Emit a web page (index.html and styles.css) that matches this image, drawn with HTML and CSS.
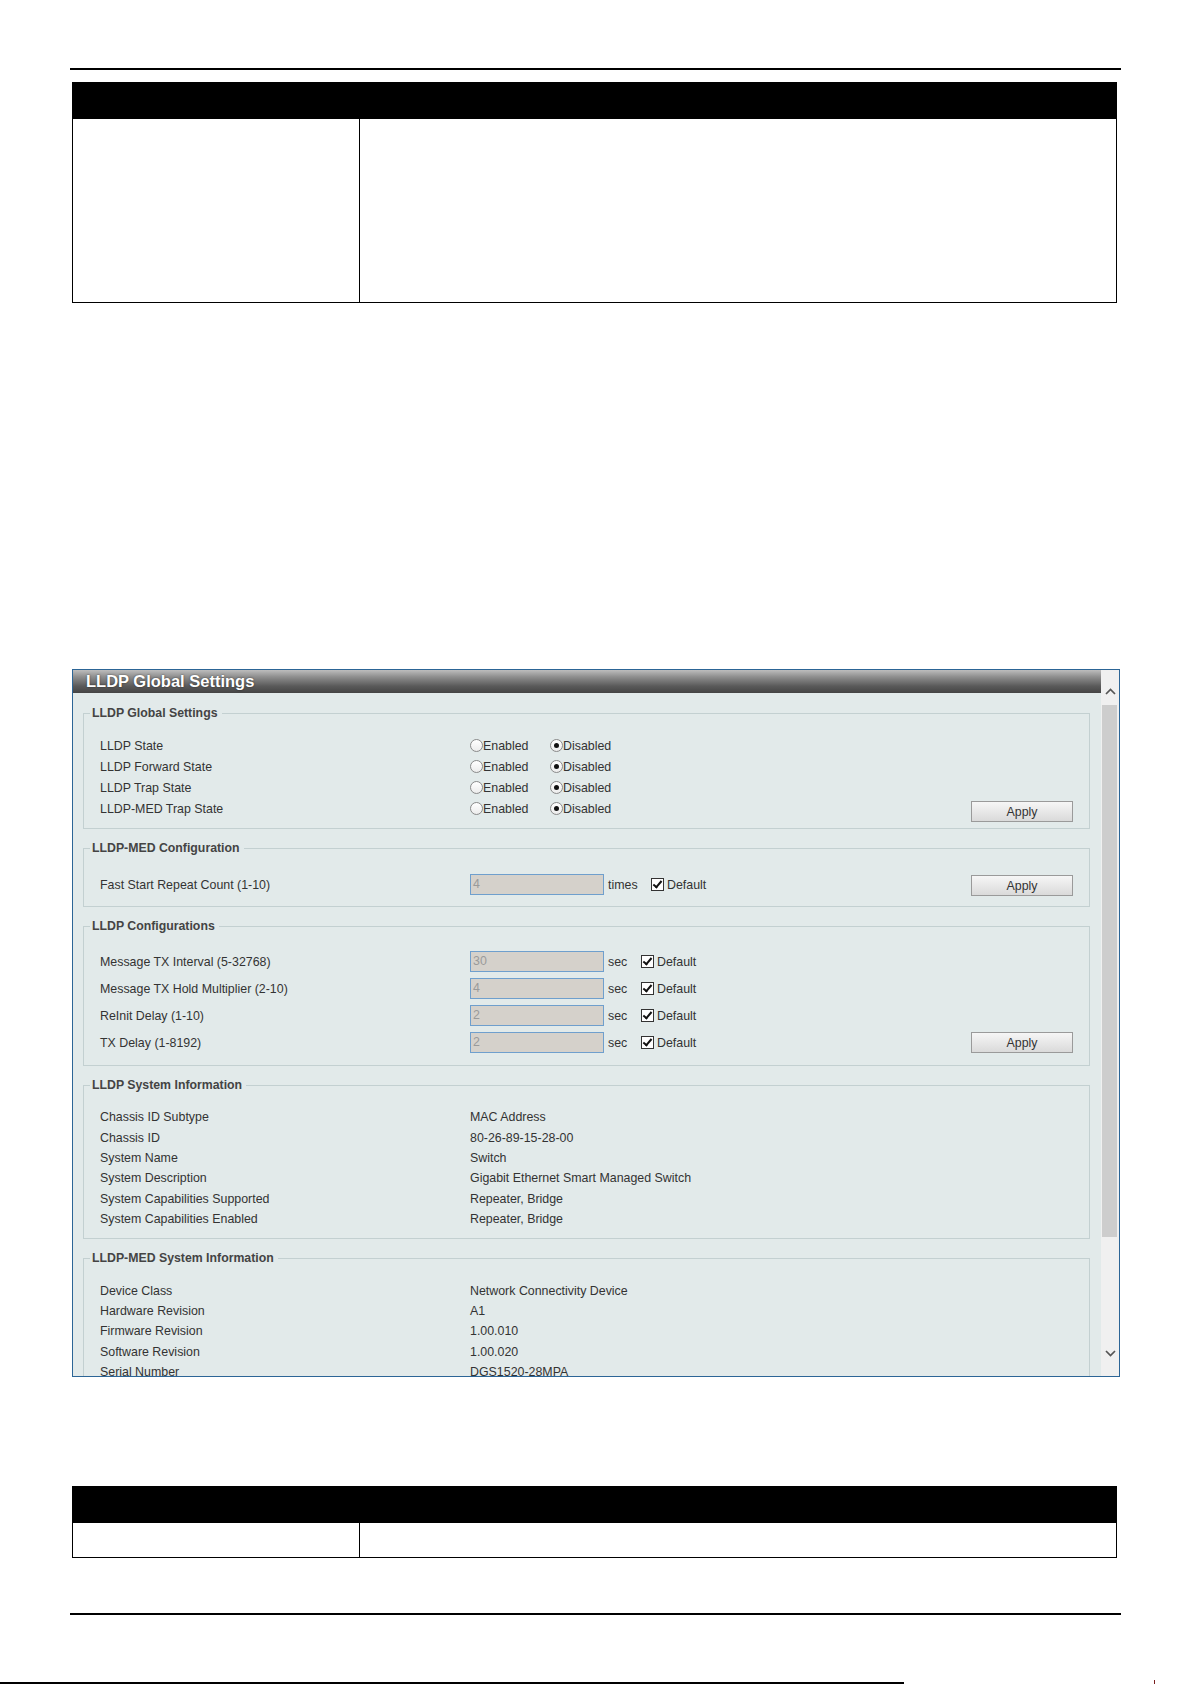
FILE: index.html
```html
<!DOCTYPE html>
<html lang="en">
<head>
    <meta charset="UTF-8">
    <title>LLDP Global Settings</title>
    <link rel="stylesheet" href="styles.css">
</head>
<body>
<div class="page">
    <div class="rule"></div>

    <div class="tbl tbl-big">
        <div class="tbl-head"></div>
        <div class="tbl-row">
            <div class="tbl-cell first"></div>
            <div class="tbl-cell"></div>
        </div>
    </div>

    <div class="panel">
        <div class="panel-main">
            <div class="panel-title">LLDP Global Settings</div>
            <div class="panel-content">

                <fieldset class="group">
                    <legend>LLDP Global Settings</legend>
                    <div class="row r-radio">
                        <span class="lbl">LLDP State</span>
                        <span class="opt"><span class="radio"></span>Enabled</span>
                        <span class="opt"><span class="radio on"></span>Disabled</span>
                    </div>
                    <div class="row r-radio">
                        <span class="lbl">LLDP Forward State</span>
                        <span class="opt"><span class="radio"></span>Enabled</span>
                        <span class="opt"><span class="radio on"></span>Disabled</span>
                    </div>
                    <div class="row r-radio">
                        <span class="lbl">LLDP Trap State</span>
                        <span class="opt"><span class="radio"></span>Enabled</span>
                        <span class="opt"><span class="radio on"></span>Disabled</span>
                    </div>
                    <div class="row r-radio">
                        <span class="lbl">LLDP-MED Trap State</span>
                        <span class="opt"><span class="radio"></span>Enabled</span>
                        <span class="opt"><span class="radio on"></span>Disabled</span>
                        <button class="apply">Apply</button>
                    </div>
                </fieldset>

                <fieldset class="group">
                    <legend>LLDP-MED Configuration</legend>
                    <div class="row r-input r-single">
                        <span class="lbl">Fast Start Repeat Count (1-10)</span>
                        <span class="field">4</span>
                        <span class="unit unit-times">times</span>
                        <span class="check"></span><span class="chk-text">Default</span>
                        <button class="apply">Apply</button>
                    </div>
                </fieldset>

                <fieldset class="group">
                    <legend>LLDP Configurations</legend>
                    <div class="row r-input">
                        <span class="lbl">Message TX Interval (5-32768)</span>
                        <span class="field">30</span>
                        <span class="unit">sec</span>
                        <span class="check"></span><span class="chk-text">Default</span>
                    </div>
                    <div class="row r-input">
                        <span class="lbl">Message TX Hold Multiplier (2-10)</span>
                        <span class="field">4</span>
                        <span class="unit">sec</span>
                        <span class="check"></span><span class="chk-text">Default</span>
                    </div>
                    <div class="row r-input">
                        <span class="lbl">ReInit Delay (1-10)</span>
                        <span class="field">2</span>
                        <span class="unit">sec</span>
                        <span class="check"></span><span class="chk-text">Default</span>
                    </div>
                    <div class="row r-input">
                        <span class="lbl">TX Delay (1-8192)</span>
                        <span class="field">2</span>
                        <span class="unit">sec</span>
                        <span class="check"></span><span class="chk-text">Default</span>
                        <button class="apply">Apply</button>
                    </div>
                </fieldset>

                <fieldset class="group">
                    <legend>LLDP System Information</legend>
                    <div class="row r-text"><span class="lbl">Chassis ID Subtype</span><span>MAC Address</span></div>
                    <div class="row r-text"><span class="lbl">Chassis ID</span><span>80-26-89-15-28-00</span></div>
                    <div class="row r-text"><span class="lbl">System Name</span><span>Switch</span></div>
                    <div class="row r-text"><span class="lbl">System Description</span><span>Gigabit Ethernet Smart Managed Switch</span></div>
                    <div class="row r-text"><span class="lbl">System Capabilities Supported</span><span>Repeater, Bridge</span></div>
                    <div class="row r-text"><span class="lbl">System Capabilities Enabled</span><span>Repeater, Bridge</span></div>
                </fieldset>

                <fieldset class="group">
                    <legend>LLDP-MED System Information</legend>
                    <div class="row r-text"><span class="lbl">Device Class</span><span>Network Connectivity Device</span></div>
                    <div class="row r-text"><span class="lbl">Hardware Revision</span><span>A1</span></div>
                    <div class="row r-text"><span class="lbl">Firmware Revision</span><span>1.00.010</span></div>
                    <div class="row r-text"><span class="lbl">Software Revision</span><span>1.00.020</span></div>
                    <div class="row r-text"><span class="lbl">Serial Number</span><span>DGS1520-28MPA</span></div>
                </fieldset>

            </div>
        </div>
        <div class="scroll">
            <div class="scroll-btn up">
                <svg width="11" height="7" viewBox="0 0 11 7"><polyline points="1,6 5.5,1.5 10,6" fill="none" stroke="#555" stroke-width="1.7"/></svg>
            </div>
            <div class="scroll-thumb"></div>
            <div class="scroll-track"></div>
            <div class="scroll-btn down">
                <svg width="11" height="7" viewBox="0 0 11 7"><polyline points="1,1 5.5,5.5 10,1" fill="none" stroke="#555" stroke-width="1.7"/></svg>
            </div>
        </div>
    </div>

    <div class="tbl tbl-small">
        <div class="tbl-head"></div>
        <div class="tbl-row">
            <div class="tbl-cell first"></div>
            <div class="tbl-cell"></div>
        </div>
    </div>

    <div class="rule rule-bottom"></div>
</div>

<div class="page-end">
    <div class="end-line"></div>
    <div class="end-tick"></div>
</div>
</body>
</html>
```

FILE: styles.css
```css
body {
    margin: 0;
    background: #FFFFFF;
    font-family: "Liberation Sans", Arial, sans-serif;
    font-size: 12.4px;
    color: #333;
}

.page {
    width: 1051px;
    margin-left: 70px;
    padding-top: 68px;
}

.rule {
    height: 2px;
    background: #000;
}

.rule-bottom {
    margin-top: 55px;
}

/* black-headed two column tables */
.tbl {
    width: 1045px;
    margin-left: 2px;
    border: 1px solid #000;
    box-sizing: border-box;
}

.tbl-big {
    margin-top: 12px;
}

.tbl-small {
    margin-top: 109px;
}

.tbl-head {
    height: 36px;
    background: #000;
}

.tbl-row {
    display: grid;
    grid-template-columns: 287px 1fr;
}

.tbl-big .tbl-row {
    height: 183px;
}

.tbl-small .tbl-row {
    height: 34px;
}

.tbl-cell.first {
    border-right: 1px solid #000;
}

/* web ui window */
.panel {
    display: flex;
    width: 1048px;
    height: 708px;
    margin-top: 366px;
    margin-left: 2px;
    border: 1px solid #2c6596;
    box-sizing: border-box;
    background: #e2eaea;
}

.panel-main {
    flex: 1;
    overflow: hidden;
}

.panel-title {
    height: 23px;
    line-height: 23px;
    padding-left: 13px;
    color: #fff;
    font-weight: bold;
    font-size: 16.5px;
    text-shadow: 0 0 2px rgba(0, 0, 0, 0.6);
    background: linear-gradient(to bottom, #bdbdbd 0%, #8e8e8e 30%, #5a5a5a 70%, #444 100%);
}

.panel-content {
    padding: 13px 11px 0 10px;
}

.group {
    margin: 0 0 12px 0;
    padding: 15px 16px 9px 16px;
    border: 1px solid #c3d0d1;
    min-width: 0;
}

.group legend {
    margin-left: -10px;
    padding: 0 4px 0 2px;
    line-height: 14px;
    font-size: 12.3px;
    font-weight: bold;
    color: #444;
}

.row {
    display: flex;
    align-items: center;
}

.r-radio {
    height: 21px;
}

.r-radio .apply {
    margin-top: 6px;
}

.r-input {
    height: 27px;
}

.r-single {
    margin-top: 1px;
    margin-bottom: -1px;
}

.r-single .apply {
    margin-top: 2px;
}

.r-text {
    height: 20.4px;
}

.lbl {
    width: 370px;
    flex-shrink: 0;
}

.opt {
    display: inline-flex;
    align-items: center;
    width: 80px;
}

.radio {
    width: 13px;
    height: 13px;
    box-sizing: border-box;
    border: 1px solid #8a8a8a;
    border-radius: 50%;
    background: linear-gradient(to bottom, #fff, #ececec);
    position: relative;
}

.radio.on:after {
    content: '';
    position: absolute;
    left: 3px;
    top: 3px;
    width: 5px;
    height: 5px;
    border-radius: 50%;
    background: #111;
}

.field {
    width: 134px;
    height: 21px;
    line-height: 19px;
    box-sizing: border-box;
    padding-left: 2px;
    border: 1px solid #6f9fcd;
    background: #d5d1cb;
    color: #9a9a9a;
}

.unit {
    margin-left: 4px;
    width: 33px;
}

.unit-times {
    width: 43px;
}

.check {
    width: 13px;
    height: 13px;
    box-sizing: border-box;
    border: 1px solid #333;
    background: #fff;
    position: relative;
}

.check:after {
    content: '';
    position: absolute;
    left: 3px;
    top: 0;
    width: 3px;
    height: 7px;
    border: solid #111;
    border-width: 0 2px 2px 0;
    transform: rotate(40deg);
}

.chk-text {
    margin-left: 3px;
}

.apply {
    margin-left: auto;
    width: 102px;
    height: 21px;
    padding: 0;
    border: 1px solid #9a9a9a;
    background: linear-gradient(to bottom, #f6f6f6, #dadada);
    font-family: "Liberation Sans", Arial, sans-serif;
    font-size: 12.4px;
    color: #333;
}

/* drawn scrollbar */
.scroll {
    width: 18px;
    display: flex;
    flex-direction: column;
    background: #f0f0f0;
}

.scroll-btn {
    height: 35px;
    display: flex;
    justify-content: center;
}

.scroll-btn.up {
    align-items: flex-start;
    padding-top: 18px;
    box-sizing: border-box;
}

.scroll-btn.down {
    align-items: flex-end;
    padding-bottom: 19px;
    box-sizing: border-box;
}

.scroll-thumb {
    height: 532px;
    margin: 0 2px 0 1px;
    background: #cdcdcd;
}

.scroll-track {
    flex: 1;
}

/* bottom edge of the sheet */
.page-end {
    display: flex;
    align-items: flex-end;
    margin-top: 67px;
    height: 2px;
}

.end-line {
    width: 904px;
    height: 2px;
    background: #000;
}

.end-tick {
    width: 1px;
    height: 4px;
    margin-left: 250px;
    background: #7a1e1e;
}
```
